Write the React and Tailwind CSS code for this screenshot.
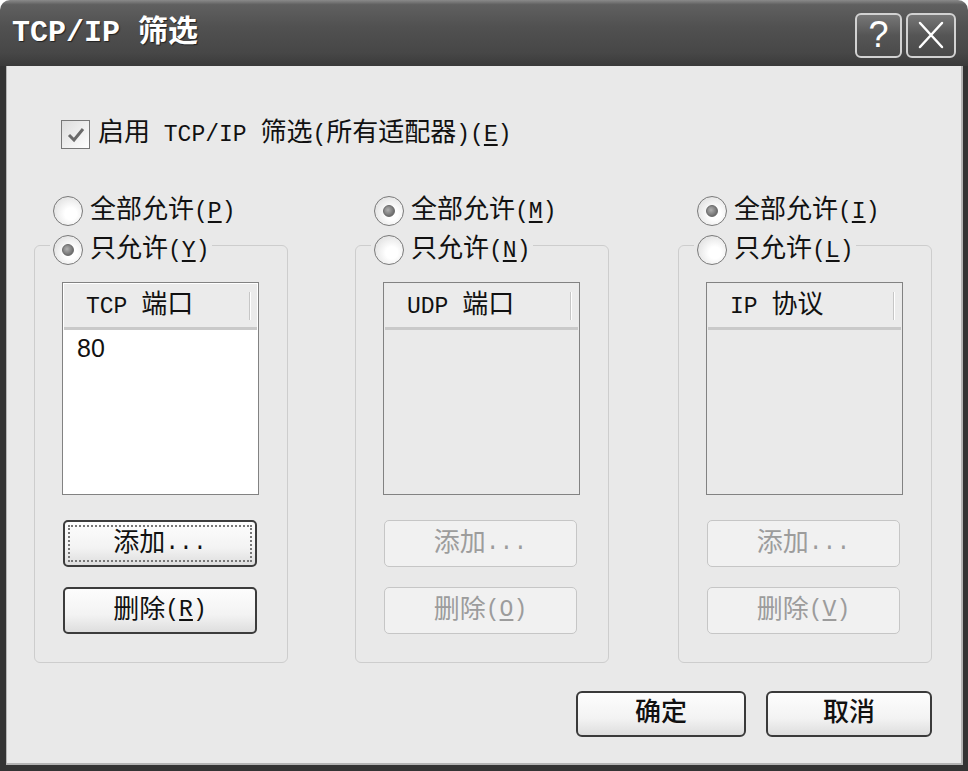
import React from "react";

const L = ({ children, u }) => (
  <span className="text-[23px] font-['Liberation_Mono',monospace]">
    {u ? (
      <>
        (<span className="underline underline-offset-[3px]">{u}</span>)
      </>
    ) : (
      children
    )}
  </span>
);

function Radio({ checked }) {
  return (
    <span className="inline-flex w-[30px] h-[30px] shrink-0 items-center justify-center rounded-full border-[1.5px] border-[#7a7a7a] bg-[radial-gradient(circle_at_60%_60%,#ffffff_25%,#d6d6d6_100%)]">
      {checked && (
        <span className="w-[12px] h-[12px] rounded-full border border-[#6a6a6a] bg-[radial-gradient(circle_at_40%_40%,#b0b0b0,#555555)]" />
      )}
    </span>
  );
}

function RadioLabel({ checked, text, k }) {
  return (
    <span className="flex items-center gap-[7px] h-[30px] text-[26px] leading-[30px] text-[#111]">
      <Radio checked={checked} />
      <span className="whitespace-nowrap">
        {text}
        <L u={k} />
      </span>
    </span>
  );
}

function Btn({ enabled, focused, children, className = "" }) {
  if (!enabled) {
    return (
      <div
        className={`h-[47px] w-[193px] rounded-[5px] border border-[#c6c6c6] bg-[#f1f1f1] flex items-center justify-center text-[26px] leading-none text-[#9c9c9c] ${className}`}
      >
        {children}
      </div>
    );
  }
  return (
    <div
      className={`h-[47px] w-[194px] rounded-[5px] border-2 border-[#3c3c3c] bg-[linear-gradient(#fdfdfd,#f3f3f3_60%,#dedede)] p-[3px] text-[26px] leading-none text-[#111] ${className}`}
    >
      <div
        className={`h-full w-full flex items-center justify-center ${
          focused ? "border-2 border-dotted border-[#777]" : ""
        }`}
      >
        {children}
      </div>
    </div>
  );
}

function Column({ topText, topKey, topChecked, botText, botKey, botChecked, header, items, enabled, delKey }) {
  return (
    <div className="w-[254px] shrink-0 flex flex-col">
      <div className="pl-[19px] h-[29px] flex items-start">
        <RadioLabel checked={topChecked} text={topText} k={topKey} />
      </div>
      <fieldset className="w-[254px] rounded-[6px] border border-[#cdcdcd] p-0">
        <legend className="ml-[15px] px-[3px] pt-[10px]">
          <RadioLabel checked={botChecked} text={botText} k={botKey} />
        </legend>
        <div className="pl-[27px] pt-[17px] pb-[28px]">
          <div
            className={`w-[197px] h-[213px] border border-[#828282] flex flex-col ${
              enabled ? "bg-white" : "bg-[#eaeaea]"
            }`}
          >
            <div className="mx-[1px] mt-[1px] h-[46px] shrink-0 bg-[#ebebeb] border-b-[3px] border-[#c9c9c9] flex items-center justify-between pl-[22px] pr-[6px]">
              <span className="text-[26px] leading-none text-[#111] whitespace-nowrap">{header}</span>
              <span className="w-[2px] h-[28px] bg-[#c6c6c6] border-r border-white" />
            </div>
            <div className="pl-[14px] pt-[3px]">
              {items.map((it) => (
                <div key={it} className="font-['Liberation_Sans',sans-serif] text-[25px] leading-[30px] text-[#111]">
                  {it}
                </div>
              ))}
            </div>
          </div>
          <Btn enabled={enabled} focused={enabled} className="mt-[25px] ml-[1px]">
            添加<L>...</L>
          </Btn>
          <Btn enabled={enabled} className="mt-[20px] ml-[1px]">
            删除<L u={delKey} />
          </Btn>
        </div>
      </fieldset>
    </div>
  );
}

export default function App() {
  return (
    <div className="w-[968px] h-[771px] bg-white flex flex-col font-['Liberation_Mono','Noto_Sans_CJK_SC',monospace] overflow-hidden">
      {/* Title bar */}
      <div className="h-[66px] shrink-0 rounded-t-[10px] bg-[linear-gradient(#8a8a8a_0%,#606060_7%,#515151_40%,#474747_80%,#3a3a3a_100%)] flex items-center justify-between pl-[12px] pr-[12px]">
        <span className="text-white font-bold text-[30px] leading-none whitespace-nowrap [text-shadow:1px_1px_1px_#222]">
          <span className="text-[30px]">TCP/IP </span>筛选
        </span>
        <div className="flex gap-[4px] mt-[4px]">
          <div className="w-[47px] h-[45px] rounded-[6px] border-2 border-[#d2d2d2] bg-[linear-gradient(#777,#555_50%,#4a4a4a)] flex items-center justify-center">
            <span className="font-['Liberation_Sans',sans-serif] text-white text-[36px] leading-none">?</span>
          </div>
          <div className="w-[50px] h-[45px] rounded-[6px] border-2 border-[#d2d2d2] bg-[linear-gradient(#777,#555_50%,#4a4a4a)] flex items-center justify-center">
            <svg width="28" height="30" viewBox="0 0 28 30">
              <path d="M3 3 L25 27 M25 3 L3 27" stroke="#fff" strokeWidth="2.5" strokeLinecap="round" fill="none" />
            </svg>
          </div>
        </div>
      </div>
      {/* Body frame */}
      <div className="flex-1 border-l-[6px] border-r-[5px] border-b-[6px] border-[#343434] flex flex-col">
        <div className="flex-1 border-l border-r-2 border-b-2 border-[#b4b4b4] bg-[#e9e9e9] flex flex-col">
          {/* checkbox row */}
          <div className="mt-[54px] ml-[54px] h-[29px] flex items-center gap-[8px]">
            <span className="w-[29px] h-[29px] shrink-0 border-[1.5px] border-[#777] bg-[linear-gradient(135deg,#dcdcdc,#ffffff)] flex items-center justify-center">
              <svg width="20" height="18" viewBox="0 0 20 18">
                <path d="M3 9 L8 14 L17 3" stroke="#6a6a6a" strokeWidth="3" fill="none" />
              </svg>
            </span>
            <span className="text-[26px] leading-[30px] text-[#111] whitespace-nowrap">
              启用<L> TCP/IP </L>筛选<L>(</L>所有适配器<L>)</L>
              <L u="E" />
            </span>
          </div>
          {/* columns */}
          <div className="mt-[47px] ml-[27px] flex">
            <Column
              topText="全部允许"
              topKey="P"
              topChecked={false}
              botText="只允许"
              botKey="Y"
              botChecked={true}
              header={
                <>
                  <L>TCP </L>端口
                </>
              }
              items={["80"]}
              enabled={true}
              delKey="R"
            />
            <div className="ml-[67px]">
              <Column
                topText="全部允许"
                topKey="M"
                topChecked={true}
                botText="只允许"
                botKey="N"
                botChecked={false}
                header={
                  <>
                    <L>UDP </L>端口
                  </>
                }
                items={[]}
                enabled={false}
                delKey="O"
              />
            </div>
            <div className="ml-[69px]">
              <Column
                topText="全部允许"
                topKey="I"
                topChecked={true}
                botText="只允许"
                botKey="L"
                botChecked={false}
                header={
                  <>
                    <L>IP </L>协议
                  </>
                }
                items={[]}
                enabled={false}
                delKey="V"
              />
            </div>
          </div>
          {/* bottom buttons */}
          <div className="mt-auto mb-[26px] mr-[29px] flex justify-end gap-[20px]">
            <div className="w-[170px] h-[46px] rounded-[6px] border-2 border-[#3a3a3a] bg-[linear-gradient(#fdfdfd,#f3f3f3_60%,#dedede)] flex items-center justify-center text-[26px] leading-none text-[#111] font-medium">
              确定
            </div>
            <div className="w-[166px] h-[46px] rounded-[6px] border-2 border-[#3a3a3a] bg-[linear-gradient(#fdfdfd,#f3f3f3_60%,#dedede)] flex items-center justify-center text-[26px] leading-none text-[#111] font-medium">
              取消
            </div>
          </div>
        </div>
      </div>
    </div>
  );
}
